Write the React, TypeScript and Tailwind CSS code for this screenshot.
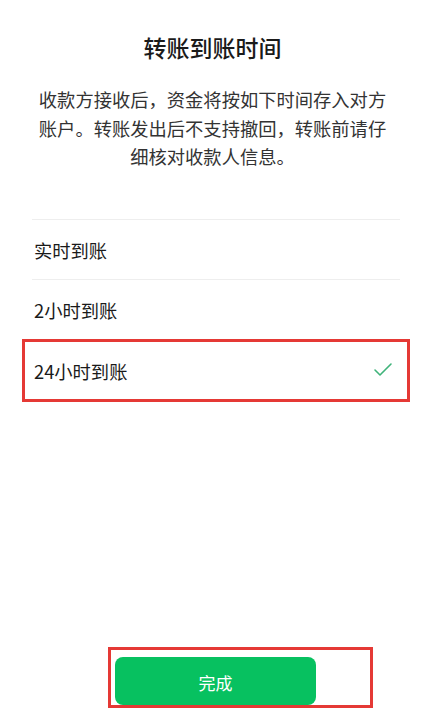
import { Check } from 'lucide-react'

const options = [
  { label: '实时到账', selected: false },
  { label: '2小时到账', selected: false },
  { label: '24小时到账', selected: true },
]

export default function App() {
  return (
    <div
      className="w-full h-[724px] bg-white flex flex-col text-[#1a1a1a]"
      style={{ fontFamily: '"Noto Sans CJK SC", "Noto Sans", sans-serif' }}
    >
      {/* Title */}
      <h1 className="pt-[31px] text-center text-[23px] leading-[32px] font-medium">
        转账到账时间
      </h1>

      {/* Description */}
      <p className="mt-[22px] mx-auto w-[354px] text-center text-[18.3px] leading-[28.5px] text-[#333]">
        收款方接收后，资金将按如下时间存入对方账户。转账发出后不支持撤回，转账前请仔细核对收款人信息。
      </p>

      {/* Options */}
      <div className="mt-[48px] ml-[32px] mr-[25px] border-t border-[#eeeeee]">
        {options.map((opt, i) =>
          opt.selected ? (
            <div
              key={i}
              className="-mx-[10px] h-[63px] border-[3px] border-[#e53935] flex items-center justify-between pl-[9px] pr-[12px] pt-[3px]"
            >
              <span className="text-[18.3px]">{opt.label}</span>
              <Check className="w-[24px] h-[24px] text-[#3fb37a] -mt-[3px]" strokeWidth={1.6} />
            </div>
          ) : (
            <div
              key={i}
              className={
                i === 0
                  ? 'h-[60px] flex items-center pl-[2px] pt-[3px] border-b border-[#eeeeee]'
                  : 'h-[59px] flex items-center pl-[2px] pt-[3px]'
              }
            >
              <span className="text-[18.3px]">{opt.label}</span>
            </div>
          )
        )}
      </div>

      <div className="flex-1" />

      {/* Done button */}
      <div className="ml-[108px] mb-[16px] w-[265px] h-[61px] border-[3px] border-[#e53935] pl-[4px] pt-[7px]">
        <button className="w-[201px] h-[48px] rounded-[8px] bg-[#07c160] text-white text-[17px] flex items-center justify-center pt-[4px]">
          完成
        </button>
      </div>
    </div>
  )
}
